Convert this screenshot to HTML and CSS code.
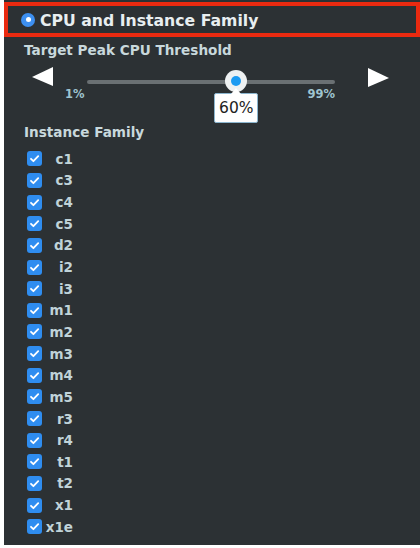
FILE: index.html
```html
<!DOCTYPE html>
<html lang="en">
<head>
    <meta charset="UTF-8">
    <meta name="viewport" content="width=device-width, initial-scale=1.0">
    <title>CPU and Instance Family</title>
    <link rel="stylesheet" href="styles.css">
</head>
<body>
    <div class="panel">
        <div class="header">
            <span class="radio"></span>
            <span class="header-text">CPU and Instance Family</span>
        </div>

        <div class="section-title threshold">Target Peak CPU Threshold</div>

        <div class="slider-row">
            <svg class="arrow arrow-left" width="21" height="19" viewBox="0 0 21 19"><polygon points="21,0 21,19 0,10" fill="#fff"/></svg>
            <div class="track-wrap">
                <div class="track"></div>
                <div class="thumb" style="left: 60.2%">
                    <span class="thumb-dot"></span>
                    <div class="tip">60%</div>
                </div>
            </div>
            <svg class="arrow arrow-right" width="21" height="19" viewBox="0 0 21 19"><polygon points="0,0 0,19 21,10" fill="#fff"/></svg>
        </div>
        <div class="scale">
            <span class="scale-min">1%</span>
            <span class="scale-max">99%</span>
        </div>

        <div class="section-title family">Instance Family</div>

        <ul class="families">
            <li><span class="check"></span><span class="name">c1</span></li>
            <li><span class="check"></span><span class="name">c3</span></li>
            <li><span class="check"></span><span class="name">c4</span></li>
            <li><span class="check"></span><span class="name">c5</span></li>
            <li><span class="check"></span><span class="name">d2</span></li>
            <li><span class="check"></span><span class="name">i2</span></li>
            <li><span class="check"></span><span class="name">i3</span></li>
            <li><span class="check"></span><span class="name">m1</span></li>
            <li><span class="check"></span><span class="name">m2</span></li>
            <li><span class="check"></span><span class="name">m3</span></li>
            <li><span class="check"></span><span class="name">m4</span></li>
            <li><span class="check"></span><span class="name">m5</span></li>
            <li><span class="check"></span><span class="name">r3</span></li>
            <li><span class="check"></span><span class="name">r4</span></li>
            <li><span class="check"></span><span class="name">t1</span></li>
            <li><span class="check"></span><span class="name">t2</span></li>
            <li><span class="check"></span><span class="name">x1</span></li>
            <li><span class="check"></span><span class="name">x1e</span></li>
        </ul>
    </div>
</body>
</html>
```

FILE: styles.css
```css
body {
    margin: 0;
    background-color: #ffffff;
    font-family: "DejaVu Sans", Verdana, sans-serif;
}
.panel {
    margin-left: 4px;
    width: 416px;
    height: 545px;
    padding-top: 2px;
    box-sizing: border-box;
    background-color: #2c3134;
    overflow: hidden;
}
.header {
    height: 27px;
    border: 4px solid #ea2a10;
    display: flex;
    align-items: center;
    padding-left: 13px;
}
.radio {
    width: 14px;
    height: 14px;
    border-radius: 50%;
    background-color: #3d8ff0;
    display: flex;
    align-items: center;
    justify-content: center;
}
.radio::after {
    content: "";
    width: 5px;
    height: 5px;
    border-radius: 50%;
    background-color: #fff;
}
.header-text {
    margin-left: 5px;
    padding-top: 1px;
    color: #e8eef0;
    font-size: 15.7px;
    font-weight: bold;
}
.section-title {
    padding-left: 20px;
    color: #c8d8dc;
    font-size: 13.6px;
    font-weight: bold;
    line-height: 20px;
}
.threshold {
    margin-top: 3px;
}
.slider-row {
    display: flex;
    align-items: flex-start;
    height: 27px;
}
.arrow {
    display: block;
    margin-top: 7px;
}
.arrow-left {
    margin-left: 28px;
}
.arrow-right {
    margin-left: 33px;
    margin-top: 8px;
}
.track-wrap {
    position: relative;
    margin-left: 34px;
    width: 248px;
    height: 27px;
}
.track {
    margin-top: 20px;
    height: 4px;
    border-radius: 2px;
    background-color: #6a7073;
}
.thumb {
    position: absolute;
    top: 10px;
    width: 22px;
    height: 22px;
    margin-left: -11px;
    border-radius: 50%;
    background-color: #eef1f2;
    display: flex;
    align-items: center;
    justify-content: center;
}
.thumb-dot {
    width: 10px;
    height: 10px;
    border-radius: 50%;
    background-color: #1c9bf2;
}
.tip {
    position: absolute;
    top: 23px;
    left: 50%;
    transform: translateX(-50%);
    width: 42px;
    height: 28px;
    border: 1px solid #8cb6cf;
    border-radius: 2px;
    background-color: #fff;
    color: #222;
    font-size: 15.5px;
    line-height: 28px;
    text-align: center;
}
.tip::before {
    content: "";
    position: absolute;
    top: -6px;
    left: 50%;
    margin-left: -5px;
    border-left: 5px solid transparent;
    border-right: 5px solid transparent;
    border-bottom: 6px solid #fff;
}
.scale {
    display: flex;
    height: 14px;
    color: #9fc4d0;
    font-size: 11.5px;
    font-weight: bold;
    line-height: 14px;
}
.scale-min {
    margin-left: 61px;
}
.scale-max {
    margin-left: 223px;
}
.family {
    margin-top: 21px;
}
.families {
    list-style: none;
    margin: 6px 0 0 0;
    padding: 0;
}
.families li {
    display: flex;
    align-items: center;
    height: 21.65px;
    padding-left: 23px;
}
.check {
    width: 15px;
    height: 15px;
    border-radius: 3px;
    background-color: #2f8df0;
    background-image: url("data:image/svg+xml,%3Csvg xmlns='http://www.w3.org/2000/svg' width='15' height='15' viewBox='0 0 15 15'%3E%3Cpath d='M4 7.8l2.4 2.4 4.8-5' fill='none' stroke='white' stroke-width='1.8' stroke-linecap='round' stroke-linejoin='round'/%3E%3C/svg%3E");
}
.name {
    width: 31px;
    text-align: right;
    color: #c0d3d9;
    font-size: 13.5px;
    font-weight: bold;
}
```
